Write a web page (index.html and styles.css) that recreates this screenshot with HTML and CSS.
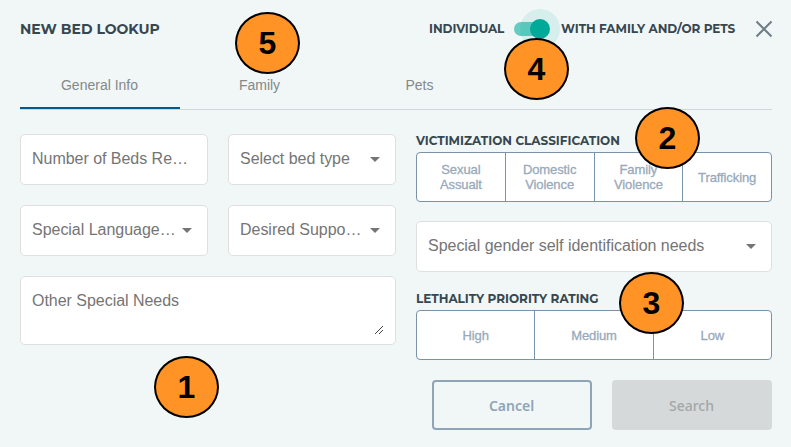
FILE: index.html
```html
<!DOCTYPE html>
<html lang="en">
<head>
<meta charset="utf-8">
<title>New Bed Lookup</title>
<link rel="stylesheet" href="styles.css">
</head>
<body>
<main class="dialog">
  <header class="header">
    <h1 class="title">NEW BED LOOKUP</h1>
    <div class="mode">
      <span class="mode-label individual">INDIVIDUAL</span>
      <span class="switch"><span class="thumb"></span></span>
      <span class="mode-label family">WITH FAMILY AND/OR PETS</span>
    </div>
    <svg class="close" width="18" height="18" viewBox="0 0 18 18"><path d="M1.5 1.5 16.5 16.5M16.5 1.5 1.5 16.5"/></svg>
  </header>
  <nav class="tabs">
    <span class="tab active">General Info</span>
    <span class="tab">Family</span>
    <span class="tab">Pets</span>
  </nav>
  <div class="columns">
    <section class="left">
      <div class="field"><span class="text">Number of Beds Re…</span></div>
      <div class="field select"><span class="text">Select bed type</span><i class="arrow"></i></div>
      <div class="field select"><span class="text">Special Language…</span><i class="arrow"></i></div>
      <div class="field select"><span class="text">Desired Suppo…</span><i class="arrow"></i></div>
      <div class="field area"><span class="text">Other Special Needs</span>
        <svg class="grip" width="10" height="10" viewBox="0 0 10 10"><path d="M1 9 9 1M5 9 9 5"/></svg>
      </div>
    </section>
    <section class="right">
      <h2 class="label victim">VICTIMIZATION CLASSIFICATION</h2>
      <div class="segments">
        <span class="segment">Sexual<br>Assualt</span>
        <span class="segment">Domestic<br>Violence</span>
        <span class="segment">Family<br>Violence</span>
        <span class="segment">Trafficking</span>
      </div>
      <div class="field select gender"><span class="text">Special gender self identification needs</span><i class="arrow"></i></div>
      <h2 class="label lethality">LETHALITY PRIORITY RATING</h2>
      <div class="segments">
        <span class="segment">High</span>
        <span class="segment">Medium</span>
        <span class="segment">Low</span>
      </div>
      <div class="actions">
        <button class="button cancel">Cancel</button>
        <button class="button search" disabled>Search</button>
      </div>
    </section>
  </div>
  <span class="marker m1">1</span>
  <span class="marker m2">2</span>
  <span class="marker m3">3</span>
  <span class="marker m4">4</span>
  <span class="marker m5">5</span>
</main>
</body>
</html>
```
FILE: styles.css
```css
* { box-sizing: border-box; }
body { margin: 0; background: #f1f7f7; font-family: "Liberation Sans", Arial, sans-serif; }
.dialog { position: relative; width: 791px; height: 447px; padding: 0 19px 0 20px; overflow: hidden; }
.header { display: flex; align-items: center; height: 58px; margin-right: -1px; }
.title, .label, .mode-label { margin: 0; font-family: Montserrat, Inter, sans-serif; font-weight: 700; color: #37474f; white-space: nowrap; }
.title { font-size: 14px; }
.mode { display: flex; align-items: center; margin-left: auto; }
.mode-label { font-size: 12px; line-height: 14px; padding-bottom: 1px; letter-spacing: -0.04px; }
.individual { width: 76px; }
.family { width: 175px; }
.switch { display: flex; align-items: center; justify-content: flex-end; width: 34px; height: 14px; margin: 0 13px 0 9px; border-radius: 7px; background: #66cbc2; }
.thumb { width: 20px; height: 20px; flex: none; margin-right: -2px; border-radius: 50%; background: #00a998; box-shadow: 0 0 0 10px rgba(0, 169, 152, 0.11); }
.close { margin-left: 19px; flex: none; fill: none; stroke: #6f7d87; stroke-width: 2; }
.tabs { display: flex; height: 52px; border-bottom: 1px solid #cfd8d9; }
.tab { width: 160px; height: 51px; padding: 19px 1px 0 0; text-align: center; font-size: 14px; line-height: 16px; color: #858889; }
.tab.active { border-bottom: 2px solid #005b8c; }
.columns { display: flex; gap: 20px; padding-top: 24px; }
.left { display: grid; grid-template-columns: 188px 168px; grid-template-rows: 51px 51px 69px; gap: 20px; width: 376px; }
.field { display: flex; align-items: center; min-width: 0; padding: 0 15px 1px 11px; border: 1px solid #dedfdf; border-radius: 5px; background: #fff; color: #757575; font-size: 16px; line-height: 20px; }
.text { flex: 1; min-width: 0; letter-spacing: -0.03px; white-space: nowrap; }
.arrow { margin: 0; border: 5px solid transparent; border-top-color: #757575; border-bottom: 0; }
.area { grid-column: 1 / 3; align-items: flex-start; padding: 14px 11px 0 11px; }
.grip { align-self: flex-end; margin-bottom: 9px; fill: none; stroke: #444; stroke-width: 1; }
.right { width: 356px; }
.label { font-size: 12px; line-height: 14px; }
.segments { display: flex; height: 50px; margin-top: 4px; border: 1px solid #7893aa; border-radius: 4px; background: #fff; }
.segment { flex: 1; display: flex; align-items: center; justify-content: center; text-align: center; font-size: 13px; line-height: 15px; letter-spacing: -0.1px; color: #98aaba; -webkit-text-stroke: 0.3px #98aaba; }
.segment + .segment { border-left: 1px solid #7893aa; }
.gender { height: 51px; margin: 19px 0 20px; }
.actions { display: flex; justify-content: flex-end; gap: 20px; margin-top: 20px; }
.button { width: 160px; height: 50px; padding: 0 1px 0 0; border: 0; border-radius: 4px; font: 600 14px "Noto Sans", sans-serif; }
.cancel { border: 2px solid #90a4b7; background: transparent; color: #90a4b7; }
.search { background: #d5d9da; color: #a3a7a8; font-weight: 500; }
.marker { position: absolute; display: flex; align-items: center; justify-content: center; width: 65px; height: 62px; border: 2px solid #000; border-radius: 50%; background: #ff9326; font-size: 32px; font-weight: 700; color: #000; }
.m1 { left: 154px; top: 356px; }
.m2 { left: 635px; top: 107px; }
.m3 { left: 619px; top: 272px; }
.m4 { left: 504px; top: 38px; }
.m5 { left: 235px; top: 12px; }
```
